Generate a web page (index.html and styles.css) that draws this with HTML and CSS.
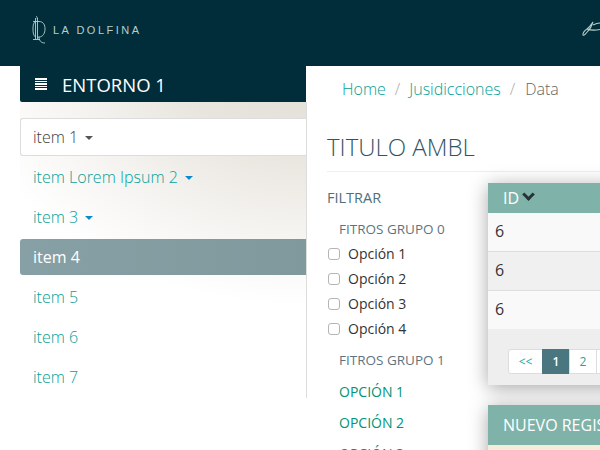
FILE: index.html
```html
<!DOCTYPE html>
<html lang="es">
  <head>
    <meta charset="UTF-8" />
    <title>La Dolfina</title>
    <link rel="stylesheet" href="styles.css">
  </head>

  <body>
    <header class="topbar">
      <div class="brand">
        <svg class="brand-mark" width="16" height="30" viewBox="0 0 16 30" fill="none" stroke="#b5cfcb" stroke-width="0.9">
          <path d="M5 1.5c1.2 0 1.6 1 .8 1.8M4.5 3v21M6.5 3v21M2 24.5h7" />
          <path d="M2 6.500h6c4.500 0 6 3.500 6 7.500s-2 8-6 8H6" />
          <path d="M4.500 6.500C2.500 7.500 2 10 2 14s.5 6.500 2.500 8" />
          <path d="M8 22c0 3 1.500 6 6 6" />
        </svg>
        <span class="brand-name">LA DOLFINA</span>
      </div>
      <svg class="signature" width="18" height="18" viewBox="0 0 18 18" fill="none" stroke="#b5cfcb" stroke-width="1.1">
        <path d="M1 16c-.5-2 2-5 4-6 2-1.500 4-4 6-7-1 3-3 7-5 9-1.500 2-4 5-5 4zM5 10c4 1.500 8 1.500 13 .5M11 6c2-1 4-2 7-2" />
      </svg>
    </header>

    <div class="layout">
      <aside class="sidebar">
        <div class="sidebar-head">
          <span class="burger"></span>
          <span>ENTORNO 1</span>
        </div>
        <nav class="side-nav">
          <a class="side-link open">item 1 <i class="caret"></i></a>
          <a class="side-link">item Lorem Ipsum 2 <i class="caret"></i></a>
          <a class="side-link">item 3 <i class="caret"></i></a>
          <a class="side-link active">item 4</a>
          <a class="side-link">item 5</a>
          <a class="side-link">item 6</a>
          <a class="side-link">item 7</a>
        </nav>
      </aside>

      <main class="content">
        <ol class="breadcrumb">
          <li><a>Home</a></li>
          <li class="sep">/</li>
          <li><a>Jusidicciones</a></li>
          <li class="sep">/</li>
          <li class="current">Data</li>
        </ol>

        <h1 class="page-title">TITULO AMBL</h1>

        <div class="columns">
          <section class="filters">
            <h2 class="filter-title">FILTRAR</h2>
            <h3 class="group-title">FITROS GRUPO 0</h3>
            <label class="check"><input type="checkbox" /> Opción 1</label>
            <label class="check"><input type="checkbox" /> Opción 2</label>
            <label class="check"><input type="checkbox" /> Opción 3</label>
            <label class="check"><input type="checkbox" /> Opción 4</label>
            <h3 class="group-title second">FITROS GRUPO 1</h3>
            <a class="filter-link">OPCIÓN 1</a>
            <a class="filter-link">OPCIÓN 2</a>
            <a class="filter-link">OPCIÓN 3</a>
          </section>

          <section class="panels">
            <div class="panel">
              <div class="table-head">ID <i class="chevron"></i></div>
              <div class="row">6</div>
              <div class="row even">6</div>
              <div class="row">6</div>
              <div class="table-foot">
                <ul class="pagination">
                  <li>&lt;&lt;</li>
                  <li class="on">1</li>
                  <li>2</li>
                  <li>3</li>
                </ul>
              </div>
            </div>
            <div class="panel new-record">
              <div class="record-head">NUEVO REGISTRO</div>
              <div class="record-body"></div>
            </div>
          </section>
        </div>
      </main>
    </div>
  </body>
</html>
```

FILE: styles.css
```css
* {
  margin: 0;
  padding: 0;
  box-sizing: border-box;
}

html,
body {
  height: 450px;
  overflow: hidden;
}

body {
  background-color: #fff;
  font-family: "Open Sans", sans-serif;
  font-size: 14px;
  color: #333;
}

.topbar {
  height: 66px;
  background-color: #012d3b;
  display: flex;
  align-items: center;
  justify-content: space-between;
  padding: 0 0 0 31px;
}

.brand {
  display: flex;
  align-items: center;
  gap: 6px;
  margin-top: -6px;
}

.brand-name {
  font-family: "Liberation Sans", sans-serif;
  font-size: 11px;
  letter-spacing: 2.5px;
  color: #b5cfcb;
}

.signature {
  margin-top: -10px;
}

.layout {
  display: flex;
  align-items: flex-start;
  padding-left: 20px;
}

.sidebar {
  width: 286px;
  height: 332px;
  flex-shrink: 0;
  background: radial-gradient(ellipse 340px 240px at 100% 0, #e2dfd7 0, #e8e5de 35%, #f5f3f0 68%, #fff 100%);
}

.sidebar-head {
  height: 36px;
  background-color: #012d3b;
  color: #fff;
  font-size: 18.5px;
  display: flex;
  align-items: center;
  gap: 15px;
  padding-left: 15px;
  border-bottom-left-radius: 2px;
}

.burger {
  width: 12px;
  height: 12px;
  background: repeating-linear-gradient(#fff 0, #fff 1.6px, transparent 1.6px, transparent 2.6px);
}

.side-nav {
  display: flex;
  flex-direction: column;
  padding-top: 16px;
}

.side-link {
  height: 36px;
  margin-bottom: 4px;
  padding-left: 13px;
  font-size: 16px;
  font-weight: 300;
  line-height: 36px;
  color: #05a196;
  border-radius: 3px 0 0 3px;
}

.side-link.open {
  height: 38px;
  margin-bottom: 3px;
  background-color: #fff;
  color: #3d3d3d;
  border: 1px solid #ddd;
  border-right: 0;
  padding-left: 12px;
}

.side-link.active {
  background: linear-gradient(90deg, #87a0a5, #7f999d);
  color: #fff;
  font-weight: 400;
}

.caret {
  display: inline-block;
  margin-left: 3px;
  vertical-align: 3px;
  border-top: 4px solid #0a8bd0;
  border-left: 4px solid transparent;
  border-right: 4px solid transparent;
}

.open .caret {
  border-top-color: #555;
}

.content {
  flex: 1;
  min-width: 0;
  height: 384px;
  padding-left: 21px;
  background-color: #fff;
  position: relative;
}

.content::before {
  content: "";
  position: absolute;
  left: 0;
  top: 36px;
  height: 296px;
  border-left: 1px solid #ddd;
}

.breadcrumb {
  display: flex;
  list-style: none;
  gap: 9px;
  height: 46px;
  padding: 11px 0 0 15px;
  font-size: 16px;
  font-weight: 300;
  line-height: 24px;
  white-space: nowrap;
}

.breadcrumb a {
  color: #05a196;
}

.sep {
  color: #aaa;
}

.current {
  color: #666;
  margin-left: 1px;
}

.page-title {
  font-size: 24px;
  font-weight: 300;
  line-height: 34px;
  color: #2f5563;
  height: 60px;
  padding-top: 18px;
  border-bottom: 1px solid #eee;
}

.columns {
  display: flex;
  padding-top: 11px;
}

.filters {
  width: 161px;
  flex-shrink: 0;
}

.filter-title {
  font-size: 14.5px;
  font-weight: 400;
  line-height: 20px;
  color: #4f6f7a;
  margin-top: 5px;
}

.group-title {
  font-size: 13.5px;
  font-weight: 400;
  line-height: 20px;
  color: #5d7480;
  padding-left: 12px;
  margin-top: 11px;
  margin-bottom: 2px;
}

.group-title.second {
  margin-top: 9px;
  margin-bottom: 6px;
}

.check {
  display: flex;
  align-items: center;
  gap: 8px;
  height: 25px;
  font-size: 14px;
  color: #333;
}

.check input {
  appearance: none;
  width: 12px;
  height: 12px;
  margin-left: 1px;
  background-color: #fff;
  border: 1px solid #b5b5b5;
  border-radius: 3px;
}

.filter-link {
  display: block;
  font-size: 14px;
  font-weight: 500;
  line-height: 31px;
  color: #009479;
  padding-left: 12px;
}

.panels {
  flex: 1;
  min-width: 0;
  display: flex;
  flex-direction: column;
  gap: 20px;
  width: 300px;
}

.panel {
  width: 300px;
  box-shadow: 0 3px 18px rgba(0, 0, 0, 0.35);
}

.table-head {
  height: 30px;
  padding-left: 15px;
  background-color: #7fb3a9;
  color: #fff;
  font-size: 16px;
  line-height: 30px;
}

.chevron {
  display: inline-block;
  width: 9px;
  height: 9px;
  margin-left: 1px;
  vertical-align: 5px;
  border-right: 3px solid #263238;
  border-bottom: 3px solid #263238;
  transform: rotate(45deg);
}

.row {
  height: 39px;
  padding-left: 7px;
  background-color: #f9f9f9;
  border-bottom: 1px solid #ddd;
  font-size: 16px;
  line-height: 36px;
}

.row.even {
  background-color: #f0f0f0;
}

.row:nth-last-child(2) {
  border-bottom: 0;
  height: 38px;
}

.table-foot {
  height: 56px;
  background-color: #eee;
  padding: 20px 0 0 20px;
}

.pagination {
  display: flex;
  list-style: none;
  font-size: 12px;
  height: 25px;
}

.pagination li {
  width: 28px;
  line-height: 23px;
  text-align: center;
  color: #17a89e;
  background-color: #fff;
  border: 1px solid #ddd;
  margin-left: -1px;
}

.pagination li:first-child {
  width: 35px;
  margin-left: 0;
  border-radius: 3px 0 0 3px;
}

.pagination .on {
  background-color: #4a7680;
  border-color: #4a7680;
  color: #fff;
  font-weight: 600;
}

.record-head {
  height: 40px;
  padding-left: 15px;
  background-color: #7fb3a9;
  color: #fff;
  font-size: 16px;
  line-height: 40px;
  white-space: nowrap;
}

.record-body {
  height: 60px;
  background-color: #f7ecd9;
}
```
